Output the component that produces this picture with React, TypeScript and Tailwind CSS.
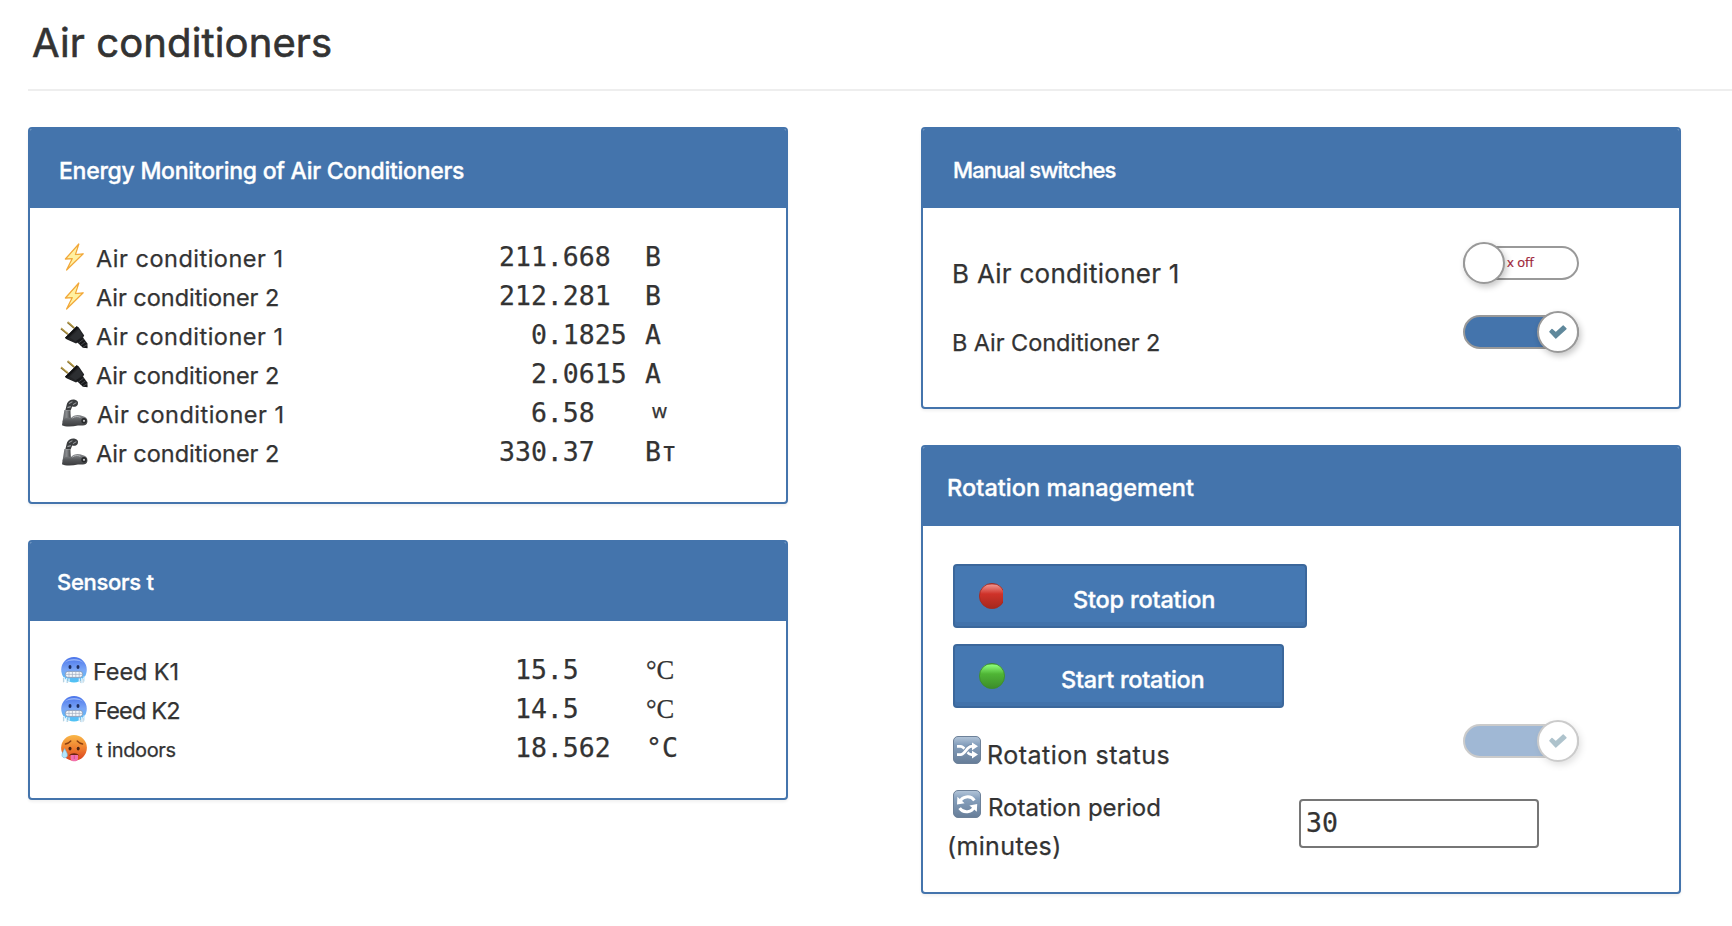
import type { ReactNode } from 'react';

const sans = "font-['Inter','Liberation_Sans',sans-serif]";
const mono = "font-['DejaVu_Sans_Mono',monospace]";

function Bolt() {
  return (
    <svg width="28" height="28" viewBox="0 0 28 28">
      <path d="M18.8 1 L5.4 16 L12.3 15.6 L6.6 27 L23.2 10.8 L15.4 11.6 Z" fill="#fff3a6" stroke="#f2a93b" strokeWidth="1.3" strokeLinejoin="round" />
      <path d="M17 4.5 L8 14.9 L14 14.4 L9.6 22.5 L20 12 L13.6 12.6 Z" fill="#fff0a0" />
    </svg>
  );
}

function Plug() {
  return (
    <svg width="28" height="28" viewBox="0 0 28 28">
      <path d="M1 7.4 L8 13.2 M7.6 1.2 L14.2 7" stroke="#8a7434" strokeWidth="1.9" />
      <path d="M1 6.8 L8 12.6 M7.8 .8 L14.4 6.4" stroke="#d9bd62" strokeWidth=".8" />
      <path d="M5 16.8 L16.6 5.2 L18.8 6.6 L24.2 14.6 L21.4 19.4 L16 22.6 L7 18.6 Z" fill="#232426" />
      <path d="M5 16.8 L16.6 5.2 L18.4 6.4 L6.6 18.2 Z" fill="#111214" />
      <path d="M10 16.6 L18.8 8.2 L22.6 14.4 L15.8 20.4 Z" fill="#2c2e31" />
      <path d="M16 20 L23 16.6 L27.4 22.6 L27.6 27.2 L22.8 26.8 Z" fill="#17181a" />
      <path d="M18.4 22.2 L23.6 18.2 M20.6 24.4 L25.6 20.6 M23 26.2 L27.2 23.6" stroke="#54575b" strokeWidth=".8" />
    </svg>
  );
}

function MechArm() {
  return (
    <svg width="28" height="28" viewBox="0 0 28 28">
      <defs>
        <linearGradient id="steel" x1="0" y1="0" x2="0" y2="1">
          <stop offset="0" stopColor="#8c8e91" />
          <stop offset=".5" stopColor="#56585b" />
          <stop offset="1" stopColor="#3a3b3d" />
        </linearGradient>
        <linearGradient id="upper" x1="0" y1="0" x2="1" y2="0">
          <stop offset="0" stopColor="#5f6164" />
          <stop offset=".5" stopColor="#8a8c8f" />
          <stop offset="1" stopColor="#3f4143" />
        </linearGradient>
      </defs>
      <path d="M7 4.4 C8.6 1.2 12 0 15 .8 C17.6 1.4 18.6 3.2 17.8 5.4 C17 7.6 14.2 8.4 12.2 7.4 L10.6 11.4 L5.4 11 Z" fill="#3b3d3f" />
      <path d="M9 4.6 L12.4 2.6 M13 5.6 L16.4 3.6 M7.4 8.6 L10.8 7.6" stroke="#9b9da0" strokeWidth="1.1" />
      <path d="M4.4 11 L10.4 11.4 L10.8 19 L5.2 24 L2.6 22.4 Z" fill="url(#upper)" />
      <path d="M2.6 22 C5 17.6 8.4 18.6 11 19 C13.6 15.4 19 15.2 22.4 17 C26.6 17.6 28.4 21 27 24.4 C25 27.4 20.8 26.4 18 26.6 C12 28 4.4 28 2 26.2 Z" fill="url(#steel)" />
      <circle cx="24" cy="21.8" r="2.7" fill="#27282a" />
      <circle cx="24" cy="21.8" r="1.1" fill="#c5c7c9" />
      <path d="M12.4 19 C15 17 18.4 17.2 20.4 18.4" stroke="#b3b5b8" strokeWidth="1" fill="none" />
    </svg>
  );
}

function ColdFace() {
  return (
    <svg width="28" height="28" viewBox="0 0 28 28">
      <defs>
        <linearGradient id="cold" x1="0" y1="0" x2="0" y2="1">
          <stop offset="0" stopColor="#4a74ea" />
          <stop offset=".5" stopColor="#7ba6f6" />
          <stop offset="1" stopColor="#4dc4f4" />
        </linearGradient>
      </defs>
      <circle cx="14" cy="13.8" r="12.8" fill="url(#cold)" />
      <path d="M4.6 7 C8 1.6 20 1.6 23.4 7 C19 3.8 9 3.8 4.6 7 Z" fill="#a9c3fb" opacity=".75" />
      <ellipse cx="10" cy="11" rx="1.5" ry="1.9" fill="#1f2e5e" />
      <ellipse cx="18" cy="11" rx="1.5" ry="1.9" fill="#1f2e5e" />
      <rect x="5.4" y="15.4" width="17.2" height="6" rx="2.6" fill="#f4f7fb" stroke="#7f8da8" strokeWidth=".7" />
      <path d="M6 18.4 H22 M9 15.6 V21.2 M12.4 15.6 V21.2 M15.8 15.6 V21.2 M19.2 15.6 V21.2" stroke="#a3aec2" strokeWidth=".7" />
      <path d="M4 21 V26 M6.6 22 V27 M9 22.4 V25.4 M19.4 22.4 V26 M21.8 22 V27.2 M24.2 20.6 V25.4" stroke="#d3efff" strokeWidth="1.5" />
      <path d="M3.4 22 V26.4 M7.6 23.4 V27 M20.6 24 V27 M23.2 23 V26.8" stroke="#8da9b8" strokeWidth=".5" />
    </svg>
  );
}

function HotFace() {
  return (
    <svg width="28" height="28" viewBox="0 0 28 28">
      <defs>
        <linearGradient id="hot" x1="0" y1="0" x2="0" y2="1">
          <stop offset="0" stopColor="#f9b849" />
          <stop offset=".5" stopColor="#f0802f" />
          <stop offset="1" stopColor="#d9401f" />
        </linearGradient>
      </defs>
      <circle cx="14" cy="13.8" r="12.9" fill="url(#hot)" />
      <path d="M5.4 10 C7.4 9.6 9.4 8.6 10.8 7 M22.6 10 C20.6 9.6 18.6 8.6 17.2 7" stroke="#8a3f12" strokeWidth="1.3" fill="none" strokeLinecap="round" />
      <ellipse cx="10" cy="14.6" rx="1.5" ry="1.9" fill="#4a2413" />
      <ellipse cx="18.2" cy="14.6" rx="1.5" ry="1.9" fill="#4a2413" />
      <path d="M9 21.6 C11.4 18.6 16.8 18.6 19 21.6 Z" fill="#6b2412" />
      <path d="M10.6 21 H18 V24.4 C18 28.2 10.6 28.2 10.6 24.4 Z" fill="#f26fae" />
      <path d="M14.3 21.4 V25" stroke="#c94586" strokeWidth=".8" />
      <path d="M4.6 14.6 C6 17.6 7.6 19.4 7.4 21.4 C7 24.6 2.4 24.6 2 21.4 C1.8 19.4 3.4 17.4 4.6 14.6 Z" fill="#b5e6fb" stroke="#6fb6dc" strokeWidth=".6" />
    </svg>
  );
}

function Dot({ id, top, mid, low }: { id: string; top: string; mid: string; low: string }) {
  return (
    <svg width="26" height="26" viewBox="0 0 26 26" className="shrink-0">
      <defs>
        <linearGradient id={id} x1="0" y1="0" x2="0" y2="1">
          <stop offset="0" stopColor={low} />
          <stop offset=".07" stopColor={top} />
          <stop offset=".42" stopColor={mid} />
          <stop offset="1" stopColor={low} />
        </linearGradient>
      </defs>
      <circle cx="13" cy="13" r="12.6" fill={`url(#${id})`} stroke={low} strokeWidth=".8" />
    </svg>
  );
}

function Tile({ id, children }: { id: string; children: ReactNode }) {
  return (
    <svg width="28" height="28" viewBox="0 0 28 28" className="shrink-0">
      <defs>
        <linearGradient id={id} x1="0" y1="0" x2="0" y2="1">
          <stop offset="0" stopColor="#b4c6da" />
          <stop offset=".3" stopColor="#86a0bd" />
          <stop offset="1" stopColor="#667d98" />
        </linearGradient>
      </defs>
      <rect x=".5" y=".5" width="27" height="27" rx="4.5" fill={`url(#${id})`} stroke="#6d8199" />
      {children}
    </svg>
  );
}

function ShuffleTile() {
  return (
    <Tile id="tile-shuffle">
      <path d="M4 10.3 H7.4 C12.6 10.3 13.4 18.6 18.4 18.6 H20" stroke="#fff" strokeWidth="2.7" fill="none" />
      <path d="M7.4 18.6 C12.6 18.6 13.4 10.3 18.4 10.3" stroke="#7890ac" strokeWidth="4.6" fill="none" />
      <path d="M4 18.6 H7.4 C12.6 18.6 13.4 10.3 18.4 10.3 H20" stroke="#fff" strokeWidth="2.7" fill="none" />
      <path d="M19 6.4 L25 10.3 L19 14.2 Z M19 14.7 L25 18.6 L19 22.5 Z" fill="#fff" />
    </Tile>
  );
}

function CycleTile() {
  return (
    <Tile id="tile-cycle">
      <path d="M6.6 12.4 C8.6 6 17.6 4.8 21.4 10.4" stroke="#fff" strokeWidth="3" fill="none" />
      <path d="M21.4 16.2 C19.4 22.6 10.4 23.8 6.6 18.2" stroke="#fff" strokeWidth="3" fill="none" />
      <path d="M4.4 6.8 L4 14.6 L11.6 13.2 Z M23.8 21.8 L24.2 14 L16.4 15.4 Z" fill="#fff" />
    </Tile>
  );
}

function Toggle({ on, disabled }: { on: boolean; disabled?: boolean }) {
  return (
    <div className={`flex h-[42px] w-[116px] items-center ${disabled ? 'opacity-50' : ''}`}>
      <div className={`flex h-[34px] w-[116px] items-center rounded-full border-2 border-[#999] ${on ? 'justify-end bg-[#4474ac]' : 'justify-start bg-white'}`}>
        <div className={`flex size-[42px] shrink-0 items-center justify-center rounded-full border-2 border-[#999] bg-white shadow-[2px_3px_6px_rgba(0,0,0,0.22)] ${on ? '-mr-[2px]' : '-ml-[2px]'}`}>
          {on && (
            <svg width="18" height="14" viewBox="0 0 18 14">
              <path d="M3 4.4 L6.8 7.8 L14.2 1 L17 3.8 L6.8 13 L.9 6.8 Z" fill="#5f889b" stroke="#5f889b" strokeWidth="1.3" strokeLinejoin="round" />
            </svg>
          )}
        </div>
        {!on && <span className="-mt-px ml-[2px] font-['Open_Sans','Noto_Sans',sans-serif] text-[13px] leading-4 text-[#9d2235] [-webkit-text-stroke:0.2px]">x off</span>}
      </div>
    </div>
  );
}

function Card({ title, titleClass, className, children }: { title: string; titleClass: string; className: string; children: ReactNode }) {
  return (
    <section className={`w-[760px] overflow-hidden rounded-[4px] border-2 border-[#4474ac] bg-white shadow-[0_2px_3px_rgba(0,0,0,0.06)] ${className}`}>
      <h2 className={`flex h-[79px] items-center bg-[#4474ac] font-medium whitespace-nowrap text-white [-webkit-text-stroke:0.35px] ${titleClass}`}>{title}</h2>
      {children}
    </section>
  );
}

type Reading = { icon: ReactNode; label: string; labelClass: string; value: string; unit: string; unitClass?: string };

function Readings({ rows, labelPad }: { rows: Reading[]; labelPad: string }) {
  return (
    <div className="flex flex-col pt-[29px] pl-[30px]">
      {rows.map((r, i) => (
        <div key={i} className="grid h-[39px] grid-cols-[36px_403px_146px_1fr] items-center text-[26.5px] leading-[30px]">
          {r.icon}
          <span className={`${labelPad} ${r.labelClass}`}>{r.label}</span>
          <span className={`whitespace-pre ${mono}`}>{r.value}</span>
          <span className={r.unitClass ?? mono}>{r.unit}</span>
        </div>
      ))}
    </div>
  );
}

const ac1 = 'text-[23.5px] leading-[30px] tracking-[0.5px]';
const ac2 = 'text-[23.5px] leading-[30px] tracking-[-0.03px]';

const energy: Reading[] = [
  { icon: <Bolt />, label: 'Air conditioner 1', labelClass: ac1, value: '211.668', unit: 'B' },
  { icon: <Bolt />, label: 'Air conditioner 2', labelClass: ac2, value: '212.281', unit: 'B' },
  { icon: <Plug />, label: 'Air conditioner 1', labelClass: ac1, value: '  0.1825', unit: 'A' },
  { icon: <Plug />, label: 'Air conditioner 2', labelClass: ac2, value: '  2.0615', unit: 'A' },
  { icon: <MechArm />, label: 'Air conditioner 1', labelClass: `${ac1} pl-px`, value: '  6.58', unit: 'w', unitClass: "pl-[7px] pb-[4px] font-['Noto_Sans',sans-serif] text-[19px] leading-[30px]" },
  { icon: <MechArm />, label: 'Air conditioner 2', labelClass: ac2, value: '330.37', unit: 'Вт' },
];

const serif = "pl-[1px] font-['Liberation_Serif',serif]";
const sensors: Reading[] = [
  { icon: <ColdFace />, label: 'Feed K1', labelClass: 'text-[23.5px] leading-[30px] tracking-[-0.1px] -ml-[3px]', value: ' 15.5', unit: '°C', unitClass: serif },
  { icon: <ColdFace />, label: 'Feed K2', labelClass: 'text-[23.5px] leading-[30px] tracking-[-0.8px] -ml-[2px]', value: ' 14.5', unit: '°C', unitClass: serif },
  { icon: <HotFace />, label: 't indoors', labelClass: 'text-[20px] leading-[30px] tracking-[-0.4px]', value: ' 18.562', unit: '°C', unitClass: `pl-px ${mono}` },
];

const buttonClass = 'flex h-16 items-center rounded-[4px] border-2 border-[#3b679b] bg-[#4578b2] pl-6 text-[23.5px] font-medium text-white shadow-[inset_0_-4px_0_#4272aa] [-webkit-text-stroke:0.35px]';

export default function App() {
  return (
    <main className={`h-[926px] w-[1732px] overflow-hidden bg-white pl-7 text-[#333] [-webkit-text-stroke:0.25px] ${sans}`}>
      <header className="h-[91px] border-b-2 border-[#eee] pt-[15px] pl-1">
        <h1 className="text-[40px] leading-[56px] tracking-[0.12px] [-webkit-text-stroke:0.6px]">Air conditioners</h1>
      </header>
      <div className="flex gap-[133px] pt-9">
        <div className="flex flex-col gap-9">
          <Card title="Energy Monitoring of Air Conditioners" titleClass="pt-[5px] pl-[29px] text-[23px] tracking-[-0.27px]" className="h-[377px]">
            <Readings rows={energy} labelPad="pt-[5px]" />
          </Card>
          <Card title="Sensors t" titleClass="pt-[2px] pl-[27px] text-[22px] tracking-[-0.28px]" className="h-[260px]">
            <Readings rows={sensors} labelPad="pt-[4px]" />
          </Card>
        </div>
        <div className="flex flex-col gap-9">
          <Card title="Manual switches" titleClass="pt-[3px] pl-[30px] text-[22px] tracking-[-0.94px]" className="h-[282px]">
            <div className="flex flex-col pt-5">
              <div className="grid h-[69px] grid-cols-[511px_1fr] items-center pl-[29px]">
                <span className="pt-[23px] text-[26px] leading-8 tracking-[0.28px]">B Air conditioner 1</span>
                <Toggle on={false} />
              </div>
              <div className="grid h-[69px] grid-cols-[511px_1fr] items-center pl-[29px]">
                <span className="pt-[23px] text-[23.5px] leading-8 tracking-[-0.07px]">B Air Conditioner 2</span>
                <Toggle on />
              </div>
            </div>
          </Card>
          <Card title="Rotation management" titleClass="pt-[3px] pl-[24px] text-[23.5px] tracking-[0.06px]" className="h-[449px]">
            <div className="flex flex-col items-start pt-[38px] pl-[30px]">
              <button className={`${buttonClass} w-[354px]`}>
                <span className="w-6 overflow-hidden">
                  <Dot id="dot-red" top="#ee8f88" mid="#cf3229" low="#a5281e" />
                </span>
                <span className="pt-[7px] pl-[70px] tracking-[-0.18px]">Stop rotation</span>
              </button>
              <button className={`${buttonClass} mt-4 w-[331px]`}>
                <Dot id="dot-green" top="#8cfb78" mid="#4fb535" low="#3c8c2b" />
                <span className="pt-[7px] pl-[56px] tracking-[-0.25px]">Start rotation</span>
              </button>
              <div className="grid h-[66px] grid-cols-[510px_1fr] items-center">
                <div className="flex items-center pt-[18px]">
                  <ShuffleTile />
                  <span className="pt-[9px] pl-[6px] text-[25px] leading-[30px] tracking-[0.5px]">Rotation status</span>
                </div>
                <Toggle on disabled />
              </div>
              <div className="grid grid-cols-[346px_1fr] items-start">
                <div className="flex flex-col pt-4">
                  <div className="flex h-7 items-center">
                    <CycleTile />
                    <span className="pt-[7px] pl-[7px] text-[24px] leading-7 tracking-[0px]">Rotation period</span>
                  </div>
                  <span className="mt-2 -ml-[6px] text-[25px] leading-10 tracking-[0.35px]">(minutes)</span>
                </div>
                <input
                  defaultValue="30"
                  aria-label="Rotation period (minutes)"
                  className={`mt-[25px] h-[49px] w-[240px] rounded-[4px] border-2 border-[#767676] bg-white pb-[2px] pl-[5px] text-[26.5px] outline-none ${mono}`}
                />
              </div>
            </div>
          </Card>
        </div>
      </div>
    </main>
  );
}
